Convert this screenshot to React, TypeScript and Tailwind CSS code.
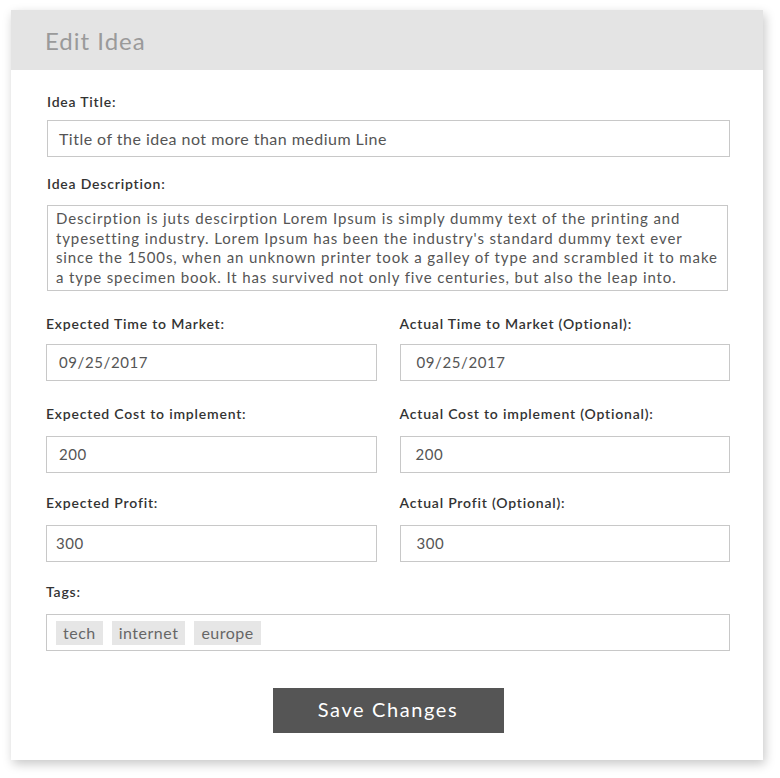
const font = { fontFamily: "Lato, 'Open Sans', sans-serif" };

function Field({
  label,
  value,
  gap,
  pad,
}: {
  label: string;
  value: string;
  gap: string;
  pad: string;
}) {
  return (
    <div>
      <div className="h-[20px] text-[14px] leading-[20px] font-semibold tracking-[0.8px] text-[#333]">{label}</div>
      <div
        className={`${gap} ${pad} h-[37px] border border-[#c8c8c8] flex items-center text-[15px] tracking-[0.6px] text-[#555]`}
      >
        {value}
      </div>
    </div>
  );
}

export default function App() {
  return (
    <div className="w-[780px] h-[778px] bg-white pl-[11px] pt-[10px]" style={font}>
      <div className="w-[752px] h-[750px] bg-white shadow-[2px_4px_10px_rgba(0,0,0,0.22)]">
        <div className="h-[60px] bg-[#e4e4e4] flex items-center pl-[34px] pt-[2px] text-[24px] tracking-[1px] text-[#9a9a9a]">
          Edit Idea
        </div>

        <div className="pl-[35px] pr-[33px] pt-[22px]">
          <div className="pl-[1px]">
            <div className="h-[20px] text-[14px] leading-[20px] font-semibold tracking-[0.8px] text-[#333]">
              Idea Title:
            </div>
            <div className="mt-[8px] h-[37px] border border-[#c8c8c8] flex items-center pl-[11px] text-[16px] tracking-[0.47px] text-[#555]">
              Title of the idea not more than medium Line
            </div>

            <div className="mt-[17px] h-[20px] text-[14px] leading-[20px] font-semibold tracking-[0.8px] text-[#333]">
              Idea Description:
            </div>
            <div className="mt-[11px] mr-[2px] h-[86px] border border-[#c8c8c8] pl-[8px] pt-[3px] text-[15px] leading-[19.5px] tracking-[0.88px] text-[#555] whitespace-nowrap overflow-hidden">
              Descirption is juts descirption Lorem Ipsum is simply dummy text of the printing and
              <br />
              typesetting industry. Lorem Ipsum has been the industry's standard dummy text ever
              <br />
              since the 1500s, when an unknown printer took a galley of type and scrambled it to make
              <br />
              a type specimen book. It has survived not only five centuries, but also the leap into.
            </div>
          </div>

          <div className="mt-[23px] grid grid-cols-2 gap-x-[23px]">
            <Field label="Expected Time to Market:" value="09/25/2017" gap="mt-[10px]" pad="pl-[12px]" />
            <Field label="Actual Time to Market (Optional):" value="09/25/2017" gap="mt-[10px]" pad="pl-[16px]" />
          </div>
          <div className="mt-[23px] grid grid-cols-2 gap-x-[23px]">
            <Field label="Expected Cost to implement:" value="200" gap="mt-[12px]" pad="pl-[12px]" />
            <Field label="Actual Cost to implement (Optional):" value="200" gap="mt-[12px]" pad="pl-[15px]" />
          </div>
          <div className="mt-[20px] grid grid-cols-2 gap-x-[23px]">
            <Field label="Expected Profit:" value="300" gap="mt-[12px]" pad="pl-[9px]" />
            <Field label="Actual Profit (Optional):" value="300" gap="mt-[12px]" pad="pl-[16px]" />
          </div>

          <div className="mt-[20px]">
            <div className="h-[20px] text-[14px] leading-[20px] font-semibold tracking-[0.8px] text-[#333]">Tags:</div>
            <div className="mt-[12px] h-[37px] border border-[#c8c8c8] flex items-center gap-[9px] pl-[9px]">
              {["tech", "internet", "europe"].map((t) => (
                <span
                  key={t}
                  className="h-[24px] px-[7px] bg-[#e6e6e6] text-[16px] leading-[24px] tracking-[0.5px] text-[#666]"
                >
                  {t}
                </span>
              ))}
            </div>
          </div>

          <div className="mt-[37px] flex justify-center">
            <button className="w-[231px] h-[45px] bg-[#555] text-white text-[20px] tracking-[1.6px] pb-[3px]">
              Save Changes
            </button>
          </div>
        </div>
      </div>
    </div>
  );
}
